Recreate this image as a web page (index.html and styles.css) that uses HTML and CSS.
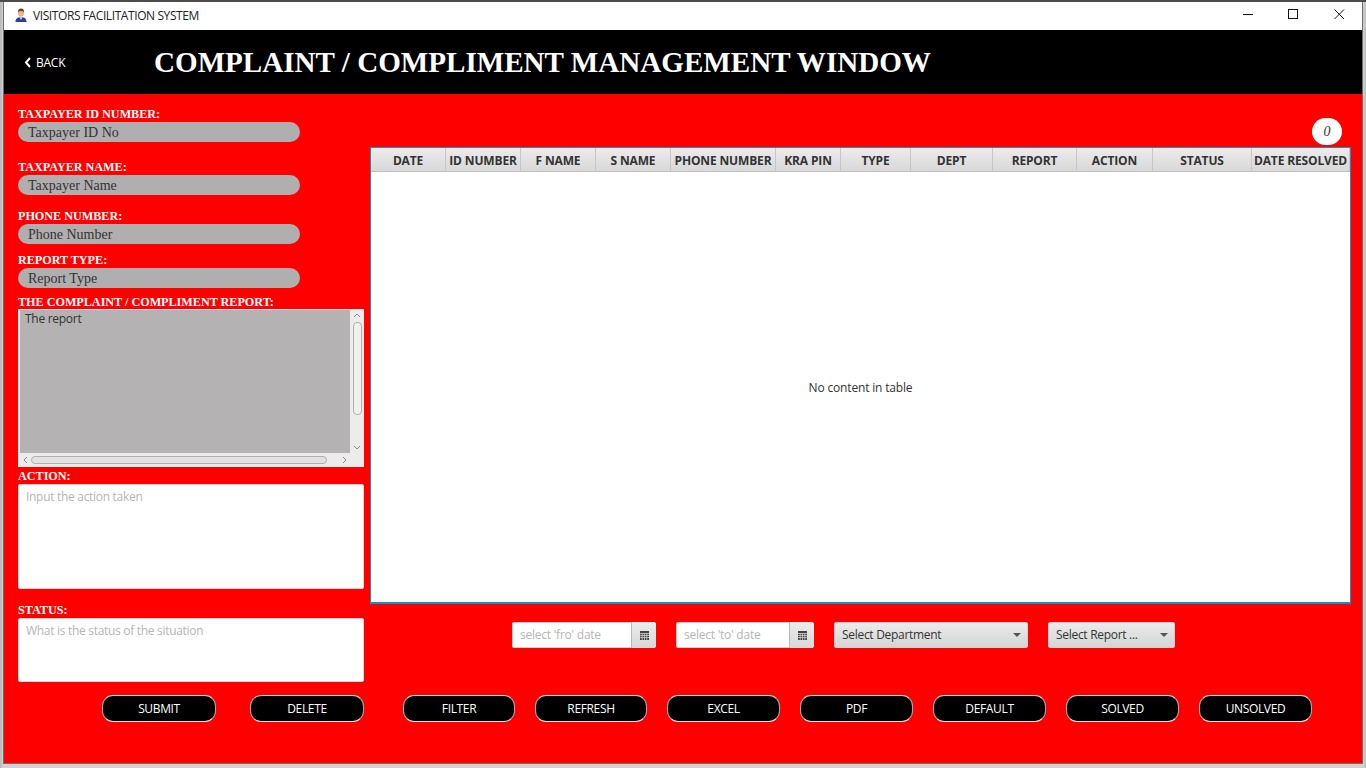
FILE: index.html
```html
<!DOCTYPE html>
<html lang="en">
<head>
<meta charset="utf-8">
<title>VISITORS FACILITATION SYSTEM</title>
<link rel="stylesheet" href="styles.css">
</head>
<body>
<div class="window">
  <div class="titlebar">
    <svg class="app-icon" width="14" height="14" viewBox="0 0 14 14">
      <path d="M1.5 14 C1.5 10.5 3.5 9.2 7 9.2 C10.5 9.2 12.5 10.5 12.5 14 Z" fill="#2b3f9e"/>
      <path d="M5.6 9.2 L7 12 L8.4 9.2 Z" fill="#e8e8f0"/>
      <ellipse cx="7" cy="5" rx="3" ry="3.8" fill="#eeb284"/>
      <path d="M3.9 4.6 C3.6 1.6 5.3 .5 7 .5 C8.8 .5 10.4 1.6 10.1 4.6 C9.4 3.2 8.4 2.9 7 2.9 C5.6 2.9 4.6 3.2 3.9 4.6 Z" fill="#6b3d1e"/>
    </svg>
    <span class="app-title">VISITORS FACILITATION SYSTEM</span>
    <div class="win-controls">
      <svg width="11" height="11" viewBox="0 0 11 11"><path d="M0 5.5 H10" stroke="#111" stroke-width="1"/></svg>
      <svg width="11" height="11" viewBox="0 0 11 11"><rect x=".5" y=".5" width="9" height="9" fill="none" stroke="#111" stroke-width="1"/></svg>
      <svg class="win-close" width="11" height="11" viewBox="0 0 11 11"><path d="M.5 .5 L10 10 M10 .5 L.5 10" stroke="#111" stroke-width="1"/></svg>
    </div>
  </div>
  <header class="header">
    <div class="back">
      <svg width="8" height="11" viewBox="0 0 8 11"><path d="M6 1 L2 5.5 L6 10" fill="none" stroke="#fff" stroke-width="2"/></svg>
      <span>BACK</span>
    </div>
    <h1 class="page-title">COMPLAINT / COMPLIMENT MANAGEMENT WINDOW</h1>
  </header>
  <div class="content">
    <div class="main">
      <section class="form">
        <label class="lbl">TAXPAYER ID NUMBER:</label>
        <div class="pill">Taxpayer ID No</div>
        <label class="lbl gap-name">TAXPAYER NAME:</label>
        <div class="pill">Taxpayer Name</div>
        <label class="lbl gap-phone">PHONE NUMBER:</label>
        <div class="pill">Phone Number</div>
        <label class="lbl gap-type">REPORT TYPE:</label>
        <div class="pill">Report Type</div>
        <label class="lbl gap-report">THE COMPLAINT / COMPLIMENT REPORT:</label>
        <div class="report">
          <div class="report-text">The report</div>
          <div class="vscroll">
            <svg width="8" height="5" viewBox="0 0 8 5"><path d="M1 4 L4 1 L7 4" fill="none" stroke="#888"/></svg>
            <div class="vthumb"></div>
            <svg width="8" height="5" viewBox="0 0 8 5"><path d="M1 1 L4 4 L7 1" fill="none" stroke="#888"/></svg>
          </div>
          <div class="hscroll">
            <svg width="5" height="8" viewBox="0 0 5 8"><path d="M4 1 L1 4 L4 7" fill="none" stroke="#888"/></svg>
            <div class="hthumb"></div>
            <svg width="5" height="8" viewBox="0 0 5 8"><path d="M1 1 L4 4 L1 7" fill="none" stroke="#888"/></svg>
          </div>
        </div>
        <label class="lbl gap-action">ACTION:</label>
        <div class="area area-action">Input the action taken</div>
        <label class="lbl gap-status">STATUS:</label>
        <div class="area area-status">What is the status of the situation</div>
      </section>
      <section class="right">
        <div class="count-row"><div class="count">0</div></div>
        <div class="table">
          <div class="thead">
            <div class="th">DATE</div>
            <div class="th">ID NUMBER</div>
            <div class="th">F NAME</div>
            <div class="th">S NAME</div>
            <div class="th">PHONE NUMBER</div>
            <div class="th">KRA PIN</div>
            <div class="th">TYPE</div>
            <div class="th">DEPT</div>
            <div class="th">REPORT</div>
            <div class="th">ACTION</div>
            <div class="th">STATUS</div>
            <div class="th">DATE RESOLVED</div>
          </div>
          <div class="tbody">No content in table</div>
        </div>
        <div class="filters">
          <div class="date date-from">
            <span class="date-text">select 'fro' date</span>
            <span class="date-btn"><svg width="9" height="9" viewBox="0 0 9 9"><path d="M0 0 H9 V9 H0 Z" fill="#444"/><path d="M0 2.5 H9 M0 4.5 H9 M0 6.5 H9 M2.2 2 V9 M4.5 2 V9 M6.8 2 V9" stroke="#ddd" stroke-width=".7"/></svg></span>
          </div>
          <div class="date date-to">
            <span class="date-text">select 'to' date</span>
            <span class="date-btn"><svg width="9" height="9" viewBox="0 0 9 9"><path d="M0 0 H9 V9 H0 Z" fill="#444"/><path d="M0 2.5 H9 M0 4.5 H9 M0 6.5 H9 M2.2 2 V9 M4.5 2 V9 M6.8 2 V9" stroke="#ddd" stroke-width=".7"/></svg></span>
          </div>
          <div class="combo combo-dept"><span>Select Department</span><i class="caret"></i></div>
          <div class="combo combo-report"><span>Select Report ...</span><i class="caret"></i></div>
        </div>
      </section>
    </div>
    <div class="actions">
      <button class="btn">SUBMIT</button>
      <button class="btn">DELETE</button>
      <button class="btn btn-n gap-filter">FILTER</button>
      <button class="btn btn-n">REFRESH</button>
      <button class="btn">EXCEL</button>
      <button class="btn">PDF</button>
      <button class="btn">DEFAULT</button>
      <button class="btn">SOLVED</button>
      <button class="btn">UNSOLVED</button>
    </div>
  </div>
</div>
</body>
</html>
```

FILE: styles.css
```css
* { box-sizing: border-box; }
html, body { margin: 0; height: 100%; overflow: hidden; }
body {
  background: linear-gradient(90deg, #b4b4b4, #d2d2d2 3px, #d2d2d2 1363px, #bdbdbd);
  font-family: "Open Sans", "Noto Sans", sans-serif;
  padding: 2px 3px 4px 3px;
  box-shadow: inset 0 2px 0 #4c4c4c;
}
.window { height: 762px; display: flex; flex-direction: column; background: #ff0000; border: 1px solid #6c6c6c; border-top: 0; }

.titlebar { height: 28px; background: #fff; display: flex; align-items: center; padding: 0 0 2px 10px; flex: none; }
.app-icon { margin-right: 5px; }
.app-title { font-size: 12px; color: #222; letter-spacing: -.41px; }
.win-controls { margin-left: auto; display: flex; gap: 34px; padding-right: 17px; padding-bottom: 1px; }
.win-close { margin-left: 1px; }

.header { height: 64px; background: #000; display: flex; align-items: center; flex: none; }
.back { width: 150px; padding-left: 20px; display: flex; align-items: center; gap: 4px; color: #fff; font-size: 12px; letter-spacing: -.25px; }
.page-title { margin: 0; font: bold 29.1px "Liberation Serif", serif; color: #fff; white-space: nowrap; }

.content { flex: 1; display: flex; flex-direction: column; }
.main { display: flex; height: 588px; }

.form { width: 346px; margin-left: 14px; padding-top: 13px; display: flex; flex-direction: column; flex: none; }
.lbl { display: block; height: 15px; font: bold 12.15px/15px "Liberation Serif", serif; color: #fff; white-space: nowrap; }
.gap-name { margin-top: 18px; }
.gap-phone { margin-top: 14px; }
.gap-type { margin-top: 9px; }
.gap-report { margin-top: 7px; }
.gap-action { margin-top: 2px; }
.gap-status { margin-top: 14px; }
.pill { width: 282px; height: 20px; padding-left: 10px; border-radius: 10px; background: #b0aeae; color: #333; font: 14px/21px "Liberation Serif", serif; }

.report { position: relative; height: 158px; margin-top: -1px; background: #ececec; padding: 1px 1px 0 2px; }
.report-text { height: 143px; width: 330px; background: #b4b2b2; color: #333; font-size: 12px; line-height: 17px; padding-left: 5px; letter-spacing: -.28px; }
.vscroll { position: absolute; top: 1px; right: 0; width: 14px; height: 143px; display: flex; flex-direction: column; align-items: center; justify-content: space-between; padding: 3px 0; }
.vthumb { width: 9px; height: 93px; margin-top: -1px; margin-bottom: 26px; border: 1px solid #b0b0b0; border-radius: 4px; background: #f0f0f0; }
.hscroll { position: absolute; left: 2px; bottom: 0; width: 330px; height: 14px; display: flex; align-items: center; justify-content: space-between; padding: 0 3px; }
.hthumb { width: 296px; height: 8px; margin-left: 1px; margin-right: 14px; border: 1px solid #b0b0b0; border-radius: 4px; background: #e2e2e2; }

.area { background: #fff; border-radius: 3px; color: #b5b5b5; font-size: 12px; line-height: 17px; padding: 4px 8px; letter-spacing: -.3px; box-shadow: inset 0 0 0 1px #d8d8d8; }
.area-action { height: 105px; }
.area-status { height: 64px; }

.right { width: 981px; margin-left: 6px; flex: none; display: flex; flex-direction: column; }
.count-row { height: 53px; padding-top: 24px; padding-right: 9px; display: flex; justify-content: flex-end; }
.count { width: 30px; height: 27px; border-radius: 14px; background: #fff; color: #333; font: italic 14px/27px "Liberation Serif", serif; text-align: center; }
.table { height: 457px; border: 1px solid #1b8fc0; border-bottom-width: 2px; background: #fff; display: flex; flex-direction: column; }
.thead { height: 24px; display: grid; grid-template-columns: 75px 75px 75px 75px 105px 65px 70px 82px 84px 76px 99px 98px; flex: none; }
.th { background: linear-gradient(#ececec, #d8d8d8); border-right: 1px solid #c6c6c6; border-bottom: 1px solid #c0c0c0; color: #333; font-size: 12px; font-weight: 700; letter-spacing: -.15px; line-height: 25px; text-align: center; white-space: nowrap; overflow: hidden; }
.tbody { flex: 1; display: flex; align-items: center; justify-content: center; color: #333; font-size: 12px; letter-spacing: -.17px; }

.filters { display: flex; margin-top: 18px; padding-left: 142px; }
.date, .combo { height: 26px; border-radius: 3px; display: flex; align-items: center; font-size: 12px; letter-spacing: -.3px; box-shadow: inset 0 0 0 1px #d0d0d0; overflow: hidden; padding-bottom: 2px; }
.date { background: #fff; color: #b5b5b5; padding-bottom: 0; }
.date-from { width: 144px; }
.date-to { width: 138px; margin-left: 20px; }
.date-text { flex: 1; padding: 0 0 2px 8px; white-space: nowrap; letter-spacing: -.24px; }
.date-btn { width: 25px; height: 100%; background: linear-gradient(#ececec, #d8d8d8); border-left: 1px solid #b8b8b8; display: flex; align-items: center; justify-content: center; }
.combo { background: linear-gradient(#ececec, #d4d4d4); color: #333; padding: 0 7px 2px 8px; justify-content: space-between; }
.combo-dept { width: 194px; margin-left: 20px; }
.combo-report { width: 127px; margin-left: 20px; }
.caret { width: 0; height: 0; margin-top: 2px; border-left: 4px solid transparent; border-right: 4px solid transparent; border-top: 4px solid #555; }

.actions { display: flex; gap: 20px; margin-top: 13px; padding-left: 98px; }
.btn { width: 113px; height: 27px; padding: 0 0 1px; background: #000; color: #fff; border: 1px solid #a8a8a8; border-top-color: #d8d8d8; border-bottom-color: #e8e8e8; border-radius: 11px; font: 12px "Open Sans", sans-serif; letter-spacing: -.35px; }
.btn:first-child { width: 114px; margin-right: 14px; }
.btn:nth-child(2) { width: 114px; }
.btn-n { width: 112px; }
.gap-filter { margin-left: 19px; }
```
